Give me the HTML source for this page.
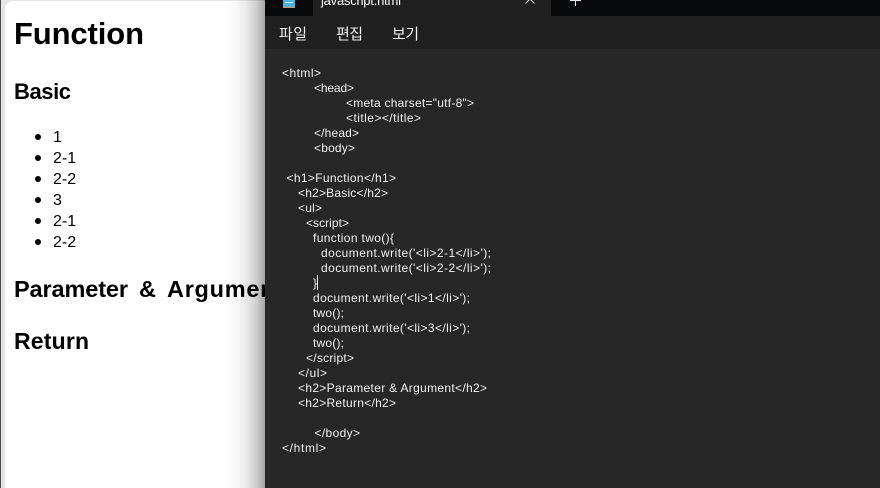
<!DOCTYPE html>
<html lang="ko">
<head>
<meta charset="utf-8">
<title>Function</title>
<style>
html,body{margin:0;padding:0;width:880px;height:488px;overflow:hidden;background:#fff}
#stage{position:relative;width:880px;height:488px;overflow:hidden;background:#e6e6e6}
#edge{position:absolute;left:0;top:0;width:1px;height:488px;background:#4a4a4a}
#page{position:absolute;left:5px;top:1px;width:300px;height:500px;background:#fff;border-top-left-radius:8px}
#shadow{position:absolute;left:225px;top:0;width:40px;height:488px;background:linear-gradient(to right,rgba(0,0,0,0) 0%,rgba(0,0,0,.03) 30%,rgba(0,0,0,.09) 55%,rgba(0,0,0,.2) 80%,rgba(0,0,0,.36) 100%)}
svg{position:absolute;left:0;top:0}
#win{position:absolute;left:265px;top:0;width:615px;height:488px;background:#272727}
#bar{position:absolute;left:0;top:0;width:615px;height:16px;background:#08090c}
#tab{position:absolute;left:48px;top:-10px;width:238px;height:26px;background:#202020}
#menu{position:absolute;left:0;top:16px;width:615px;height:33px;background:#202020}
.l{font-family:"Liberation Sans","Noto Sans CJK KR",sans-serif}
</style>
</head>
<body>
<div id="stage">
<div id="edge"></div>
<div id="page"></div>
<svg width="265" height="488" class="l">
<g font-weight="700" fill="#000">
<text x="14" y="44" font-size="31" textLength="130" lengthAdjust="spacing">Function</text>
<text x="14" y="99" font-size="22" textLength="57" lengthAdjust="spacing">Basic</text>
<text x="14" y="297" font-size="23.500" textLength="114" lengthAdjust="spacing">Parameter</text>
<text x="139" y="297" font-size="23.500">&amp;</text>
<text x="167" y="297" font-size="23.500" textLength="116" lengthAdjust="spacing">Argument</text>
<text x="14" y="349" font-size="23" textLength="75" lengthAdjust="spacing">Return</text>
</g>
<g fill="#000">
<circle cx="38" cy="137" r="3"/><circle cx="38" cy="158" r="3"/><circle cx="38" cy="179" r="3"/>
<circle cx="38" cy="200" r="3"/><circle cx="38" cy="221" r="3"/><circle cx="38" cy="242" r="3"/>
</g>
<g font-size="16" fill="#000">
<text x="53" y="142">1</text>
<text x="53" y="163">2-1</text>
<text x="53" y="184">2-2</text>
<text x="53" y="205">3</text>
<text x="53" y="226">2-1</text>
<text x="53" y="247">2-2</text>
</g>
</svg>
<div id="shadow"></div>
<div id="win">
<div id="bar"></div>
<div id="tab"></div>
<div id="menu"></div>
</div>
<svg width="880" height="488" class="l">
<!-- notepad icon -->
<rect x="283" y="0" width="12" height="8" fill="#4fb3d9"/>
<rect x="285" y="2" width="8" height="1" fill="#bfe6f4"/>
<rect x="283" y="7" width="12" height="1" fill="#c89a6a"/>
<text x="321" y="5" font-size="13" fill="#fff" textLength="80" lengthAdjust="spacing">javascript.html</text>
<path d="M525.5 3.500L530 -1L534.500 3.500" fill="none" stroke="#e8e8e8" stroke-width="1"/>
<path d="M575.5 -2V6M570 0.500H581" fill="none" stroke="#f0f0f0" stroke-width="1"/>
<g font-size="15" fill="#f0f0f0">
<text x="279" y="39" textLength="28" lengthAdjust="spacing">파일</text>
<text x="336" y="39" textLength="27" lengthAdjust="spacing">편집</text>
<text x="392" y="39" textLength="27" lengthAdjust="spacing">보기</text>
</g>
<g font-size="12" fill="#f2f2f2" xml:space="preserve">
<text x="282" y="77" textLength="39">&lt;html&gt;</text>
<text x="314" y="92" textLength="40">&lt;head&gt;</text>
<text x="346" y="107" textLength="128">&lt;meta charset="utf-8"&gt;</text>
<text x="346" y="122" textLength="75">&lt;title&gt;&lt;/title&gt;</text>
<text x="314" y="137" textLength="45">&lt;/head&gt;</text>
<text x="314" y="152" textLength="41">&lt;body&gt;</text>
<text x="286.500" y="182" textLength="109.500">&lt;h1&gt;Function&lt;/h1&gt;</text>
<text x="298" y="197" textLength="90">&lt;h2&gt;Basic&lt;/h2&gt;</text>
<text x="298" y="212" textLength="24">&lt;ul&gt;</text>
<text x="306" y="227" textLength="43">&lt;script&gt;</text>
<text x="313" y="242" textLength="81">function two(){</text>
<text x="321" y="257" textLength="170">document.write('&lt;li&gt;2-1&lt;/li&gt;');</text>
<text x="321" y="272" textLength="170">document.write('&lt;li&gt;2-2&lt;/li&gt;');</text>
<text x="313" y="287">}</text>
<text x="313" y="302" textLength="157">document.write('&lt;li&gt;1&lt;/li&gt;');</text>
<text x="313" y="317" textLength="31">two();</text>
<text x="313" y="332" textLength="157">document.write('&lt;li&gt;3&lt;/li&gt;');</text>
<text x="313" y="347" textLength="31">two();</text>
<text x="306" y="362" textLength="48">&lt;/script&gt;</text>
<text x="298" y="377" textLength="29">&lt;/ul&gt;</text>
<text x="298" y="392" textLength="189">&lt;h2&gt;Parameter &amp; Argument&lt;/h2&gt;</text>
<text x="298" y="407" textLength="98">&lt;h2&gt;Return&lt;/h2&gt;</text>
<text x="314.500" y="437" textLength="45.500">&lt;/body&gt;</text>
<text x="282" y="452" textLength="44">&lt;/html&gt;</text>
</g>
<rect x="317" y="275" width="1" height="15" fill="#f2f2f2"/>
</svg>
</div>
</body>
</html>
